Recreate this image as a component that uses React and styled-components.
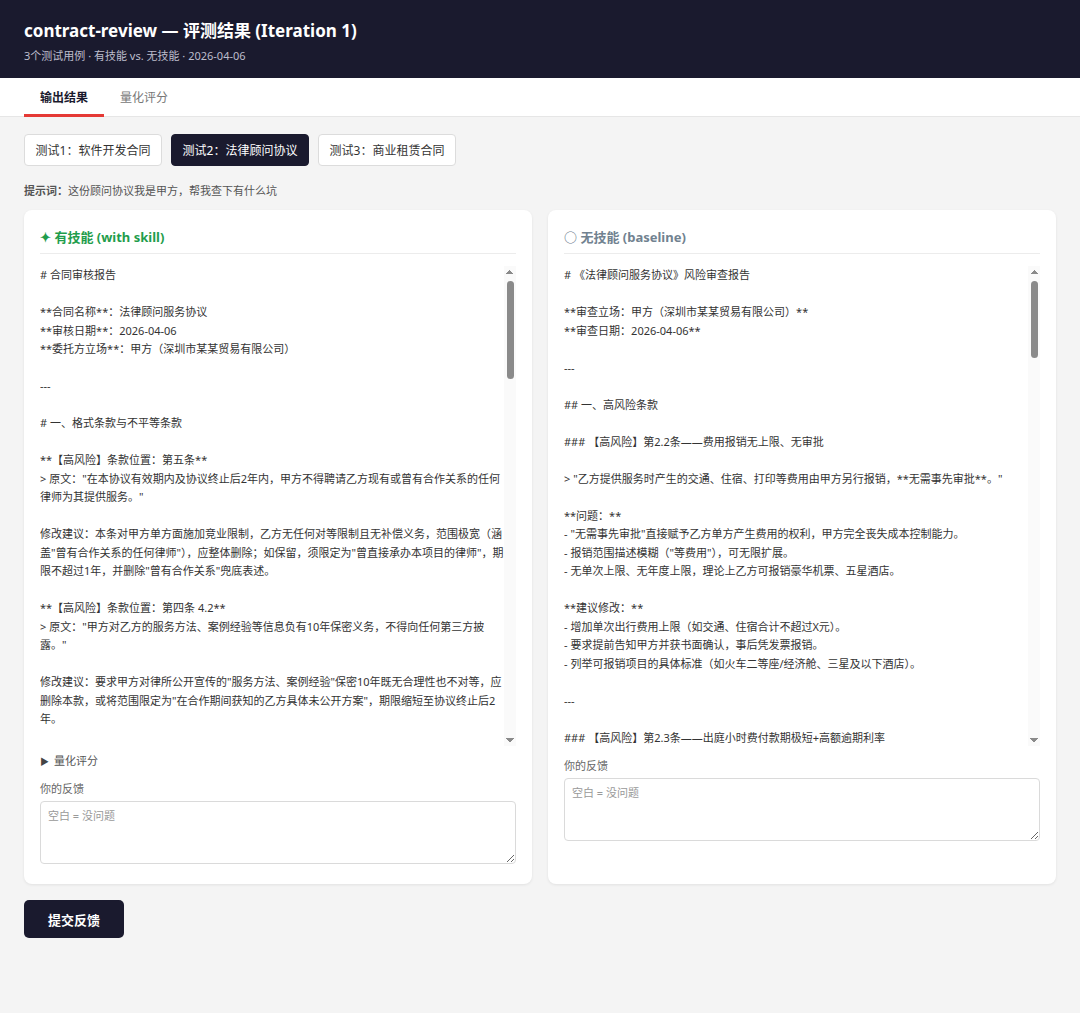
import React from 'react'
import styled, { createGlobalStyle } from 'styled-components'

const withSkill = `# 合同审核报告

**合同名称**：法律顾问服务协议
**审核日期**：2026-04-06
**委托方立场**：甲方（深圳市某某贸易有限公司）

---

# 一、格式条款与不平等条款

**【高风险】条款位置：第五条**
> 原文："在本协议有效期内及协议终止后2年内，甲方不得聘请乙方现有或曾有合作关系的任何律师为其提供服务。"

修改建议：本条对甲方单方面施加竞业限制，乙方无任何对等限制且无补偿义务，范围极宽（涵盖"曾有合作关系的任何律师"），应整体删除；如保留，须限定为"曾直接承办本项目的律师"，期限不超过1年，并删除"曾有合作关系"兜底表述。

**【高风险】条款位置：第四条 4.2**
> 原文："甲方对乙方的服务方法、案例经验等信息负有10年保密义务，不得向任何第三方披露。"

修改建议：要求甲方对律所公开宣传的"服务方法、案例经验"保密10年既无合理性也不对等，应删除本款，或将范围限定为"在合作期间获知的乙方具体未公开方案"，期限缩短至协议终止后2年。

**【中风险】条款位置：第六条 6.1**
> 原文："甲方应于每月5日前支付当月顾问费，逾期每日按应付金额的千分之五支付违约金。"

修改建议：日千分之五折合年化约182.5%，远超法定上限，应调整为"按全国银行间同业拆借中心公布的一年期贷款市场报价利率（LPR）计算"，并给予10个工作日宽限期。

**【中风险】条款位置：第七条 7.3**
> 原文："乙方律师因工作安排无法按时出席的，可指派其他律师代为处理，甲方不得拒绝。"

修改建议：应增加"须事先书面征得甲方同意，且替代律师执业年限不低于原律师"，保障甲方对服务质量的控制权。

---

# 二、权利义务失衡

**【高风险】条款位置：第三条 3.4**
> 原文："乙方对其出具的法律意见不承担任何责任，甲方据此作出决策的风险自行承担。"

修改建议：该条款免除乙方因故意或重大过失造成损失的责任，依《民法典》第五百零六条应属无效。建议改为"乙方因故意或重大过失导致法律意见错误，给甲方造成损失的，应在已收取顾问费范围内承担赔偿责任"。

**【中风险】条款位置：第八条 8.2**
> 原文："甲方提前解除本协议的，已支付费用不予退还，并应支付剩余服务期顾问费的50%作为补偿。"

修改建议：解除补偿比例过高，且未区分解除原因。建议修改为：乙方存在违约行为时甲方可无责解除；无因解除的，补偿不超过一个月顾问费。

**【低风险】条款位置：第九条**
> 原文："本协议未尽事宜，以乙方解释为准。"

修改建议：删除单方解释权条款，改为"由双方协商一致后签订补充协议"。

---

# 三、争议解决

**【中风险】条款位置：第十一条**
> 原文："因本协议产生的争议，由乙方所在地人民法院管辖。"

修改建议：甲方位于深圳，建议约定"由甲方所在地人民法院管辖"，或选择深圳国际仲裁院仲裁，降低甲方维权成本。

---

# 四、修改优先级汇总

| 优先级 | 条款 | 问题 | 建议 |
|---|---|---|---|
| 1 | 第五条 | 单方竞业限制 | 删除或大幅限缩 |
| 2 | 第三条 3.4 | 免除乙方全部责任 | 改为过错赔偿 |
| 3 | 第四条 4.2 | 不对等保密义务 | 删除或限缩 |
| 4 | 第六条 6.1 | 违约金过高 | 调整为LPR |
| 5 | 第八条 8.2 | 解除补偿过高 | 区分解除原因 |
| 6 | 第十一条 | 管辖不利 | 改为甲方所在地 |
| 7 | 第九条 | 单方解释权 | 删除 |

---

# 五、签约建议

1. 第五条、第三条3.4为实质性不利条款，建议作为签约前提条件要求对方修改。
2. 费用条款建议附件列明报销标准及审批流程。
3. 建议要求乙方提供承办律师名单、执业证号及执业年限。
4. 建议约定服务质量考核指标（如响应时限、文件出具时限）。
5. 签约前核实乙方律所执业许可及职业责任保险情况。

---

*本报告仅基于甲方提供的合同文本，不构成正式法律意见。*`

const baseline = `# 《法律顾问服务协议》风险审查报告

**审查立场：甲方（深圳市某某贸易有限公司）**
**审查日期：2026-04-06**

---

## 一、高风险条款

### 【高风险】第2.2条——费用报销无上限、无审批

> "乙方提供服务时产生的交通、住宿、打印等费用由甲方另行报销，**无需事先审批**。"

**问题：**
- "无需事先审批"直接赋予乙方单方产生费用的权利，甲方完全丧失成本控制能力。
- 报销范围描述模糊（"等费用"），可无限扩展。
- 无单次上限、无年度上限，理论上乙方可报销豪华机票、五星酒店。

**建议修改：**
- 增加单次出行费用上限（如交通、住宿合计不超过X元）。
- 要求提前告知甲方并获书面确认，事后凭发票报销。
- 列举可报销项目的具体标准（如火车二等座/经济舱、三星及以下酒店）。

---

### 【高风险】第2.3条——出庭小时费付款期极短+高额逾期利率

> "出庭小时费按每小时3000元计算，甲方应在收到账单后3日内付清，逾期按日千分之三计收利息。"

**问题：**
- 3日付款期远短于企业通常的财务审批周期（一般15-30日），甲方极易违约。
- 日千分之三折合年化约109.5%，明显超过司法保护上限。
- 出庭时长由乙方单方记录，甲方无核对途径。

**建议修改：**
- 付款期延长至收到合法发票后30日内。
- 逾期利息按LPR计算，或删除逾期利息条款。
- 要求乙方提供出庭时长记录及法院开庭通知等证明材料。

---

### 【高风险】第5条——单方竞业限制

> "在本协议有效期内及协议终止后2年内，甲方不得聘请乙方现有或曾有合作关系的任何律师为其提供服务。"

**问题：**
- 该限制仅约束甲方，乙方无任何对等义务。
- "曾有合作关系的任何律师"范围无边界，实际上限制甲方选择律师的自由。
- 无任何补偿对价。

**建议修改：**
- 建议整体删除。
- 如乙方坚持，限定为"直接承办甲方事务的律师"，期限不超过6个月。

---

### 【高风险】第3.4条——乙方免责条款

> "乙方对其出具的法律意见不承担任何责任，甲方据此作出决策的风险自行承担。"

**问题：**
- 完全免除乙方专业责任，与律师执业规范相悖。
- 依据《民法典》第506条，造成对方财产损失的故意或重大过失免责条款无效。

**建议修改：**
- 改为"乙方因故意或重大过失给甲方造成损失的，依法承担赔偿责任"。
- 要求乙方提供职业责任保险证明。

---

## 二、中风险条款

### 【中风险】第4.2条——单方保密义务

> "甲方对乙方的服务方法、案例经验等信息负有10年保密义务，不得向任何第三方披露。"

**问题：**
- 保密义务仅约束甲方，期限10年过长。
- "服务方法、案例经验"定义模糊，难以界定范围。

**建议修改：**
- 改为双方互负保密义务。
- 保密期限调整为协议终止后2年。
- 明确保密信息定义及除外情形（如已公开信息）。

### 【中风险】第7.3条——律师替换无需同意

> "乙方律师因工作安排无法按时出席的，可指派其他律师代为处理，甲方不得拒绝。"

**问题：**
- 甲方无法保障服务律师的资历与质量。

**建议修改：**
- 替换律师须提前3个工作日书面通知并经甲方同意。
- 替代律师执业年限不得低于原承办律师。

### 【中风险】第8.2条——提前解除补偿过高

> "甲方提前解除本协议的，已支付费用不予退还，并应支付剩余服务期顾问费的50%作为补偿。"

**问题：**
- 未区分乙方违约情形，甲方即使因乙方失职解约仍需补偿。

**建议修改：**
- 乙方违约时甲方有权无责解除并要求退还未服务期间费用。
- 无因解除补偿不超过一个月顾问费。

---

## 三、低风险条款

### 【低风险】第9条——单方解释权

> "本协议未尽事宜，以乙方解释为准。"

**建议修改：**
- 删除，改为双方协商签订补充协议。

### 【低风险】第11条——管辖地

> "因本协议产生的争议，由乙方所在地人民法院管辖。"

**建议修改：**
- 改为甲方所在地（深圳）人民法院管辖，或约定深圳国际仲裁院仲裁。

---

## 四、总结

本协议整体明显偏向乙方，共发现高风险条款4项、中风险条款3项、低风险条款2项。建议甲方在签约前重点就第2.2条、第2.3条、第5条、第3.4条与乙方谈判，未达成修改前不建议签署。`

const cases = ['测试1：软件开发合同', '测试2：法律顾问协议', '测试3：商业租赁合同']

const GlobalStyle = createGlobalStyle`
  html, body {
    margin: 0;
    background: #f4f4f4;
  }
  body {
    font-family: "Segoe UI", "Noto Sans", "Noto Sans CJK SC", sans-serif;
    color: #222;
  }
  * { box-sizing: border-box; }
`

function OutputPane({ text, thumb }) {
  return (
    <OutputFrame>
      <Output>{text}</Output>
      <ScrollTrack aria-hidden="true">
        <ScrollArrow $dir="up" />
        <ScrollThumb style={{ height: thumb }} />
        <ScrollArrow $dir="down" />
      </ScrollTrack>
    </OutputFrame>
  )
}

export default function App() {
  return (
    <>
      <GlobalStyle />
      <Header>
        <Title>contract-review — 评测结果 (Iteration 1)</Title>
        <Subtitle>3个测试用例 · 有技能 vs. 无技能 · 2026-04-06</Subtitle>
      </Header>
      <TabBar>
        <Tab $active>输出结果</Tab>
        <Tab>量化评分</Tab>
      </TabBar>
      <Main>
        <CaseRow>
          {cases.map((c, i) => (
            <CaseButton key={c} $active={i === 1}>{c}</CaseButton>
          ))}
        </CaseRow>
        <Prompt>
          <b>提示词：</b>这份顾问协议我是甲方，帮我查下有什么坑
        </Prompt>
        <Columns>
          <Card>
            <CardTitle $color="#1f9d4c">✦ 有技能 (with skill)</CardTitle>
            <OutputPane text={withSkill} thumb={98} />
            <Scores>
              <summary>量化评分</summary>
            </Scores>
            <FeedbackLabel>你的反馈</FeedbackLabel>
            <Feedback placeholder="空白 = 没问题" />
          </Card>
          <Card>
            <CardTitle $color="#718290">○ 无技能 (baseline)</CardTitle>
            <OutputPane text={baseline} thumb={77} />
            <FeedbackLabel>你的反馈</FeedbackLabel>
            <Feedback placeholder="空白 = 没问题" />
          </Card>
        </Columns>
        <SubmitButton>提交反馈</SubmitButton>
      </Main>
    </>
  )
}

const Header = styled.header`
  background: #1a1a2e;
  height: 78px;
  padding: 20px 24px 0;
  color: #fff;
`

const Title = styled.h1`
  margin: 0;
  font-size: 17px;
  font-weight: 700;
  line-height: 22px;
`

const Subtitle = styled.div`
  margin-top: 6px;
  font-size: 11px;
  line-height: 16px;
  color: #bdbdcc;
`

const TabBar = styled.nav`
  display: flex;
  background: #fff;
  height: 39px;
  padding: 0 24px;
  border-bottom: 1px solid #e6e6e6;
`

const Tab = styled.div`
  width: 80px;
  display: flex;
  align-items: center;
  justify-content: center;
  font-size: 12px;
  font-weight: ${({ $active }) => ($active ? 700 : 400)};
  color: ${({ $active }) => ($active ? '#1a1a2e' : '#777')};
  border-bottom: 3px solid ${({ $active }) => ($active ? '#e53935' : 'transparent')};
  padding-top: 2px;
  margin-bottom: -1px;
`

const Main = styled.main`
  padding: 17px 24px 40px;
`

const CaseRow = styled.div`
  display: flex;
  gap: 9px;
`

const CaseButton = styled.button`
  height: 32px;
  width: 138px;
  padding: 0;
  font-family: inherit;
  font-size: 12px;
  border-radius: 4px;
  border: 1.5px solid ${({ $active }) => ($active ? '#1a1a2e' : '#dcdcdc')};
  background: ${({ $active }) => ($active ? '#1a1a2e' : '#fff')};
  color: ${({ $active }) => ($active ? '#fff' : '#333')};
  cursor: pointer;
`

const Prompt = styled.div`
  margin-top: 17px;
  font-size: 11px;
  line-height: 16px;
  color: #555;

  b {
    font-weight: 700;
  }
`

const Columns = styled.div`
  display: grid;
  grid-template-columns: 1fr 1fr;
  gap: 16px;
  margin-top: 11px;
`

const Card = styled.section`
  background: #fff;
  border-radius: 8px;
  box-shadow: 0 1px 3px rgba(0, 0, 0, 0.08);
  padding: 16px 16px 20px;
`

const CardTitle = styled.h2`
  margin: 0;
  font-size: 13px;
  font-weight: 700;
  line-height: 22px;
  color: ${({ $color }) => $color};
  padding-bottom: 5px;
  border-bottom: 1px solid #ececec;
`

const OutputFrame = styled.div`
  display: flex;
  height: 480px;
  margin-top: 12px;
`

const Output = styled.pre`
  flex: 1;
  min-width: 0;
  margin: 0;
  overflow-y: auto;
  scrollbar-width: none;
  white-space: pre-wrap;
  word-break: break-all;
  font-family: inherit;
  font-size: 11px;
  line-height: 18.5px;
  color: #333;
`

const ScrollTrack = styled.div`
  flex: 0 0 12px;
  background: #fafafa;
  display: flex;
  flex-direction: column;
  align-items: center;
`

const ScrollArrow = styled.div`
  width: 8px;
  height: 12px;
  margin-top: ${({ $dir }) => ($dir === 'down' ? 'auto' : '0')};
  background-repeat: no-repeat;
  background-size: 8px 4px;
  background-position: center;
  background-image: ${({ $dir }) =>
    $dir === 'up'
      ? 'conic-gradient(from 135deg at 50% 0, #8a8a8a 0 90deg, transparent 90deg)'
      : 'conic-gradient(from -45deg at 50% 100%, #8a8a8a 0 90deg, transparent 90deg)'};
`

const ScrollThumb = styled.div`
  width: 7px;
  margin-top: 3px;
  border-radius: 4px;
  background: #8a8a8a;
`

const Scores = styled.details`
  margin-top: 7px;
  font-size: 11px;
  line-height: 15px;
  color: #555;

  summary {
    list-style: none;
    cursor: pointer;
  }
  summary::-webkit-details-marker {
    display: none;
  }
  summary::before {
    content: '▶';
    font-size: 9px;
    margin-right: 5px;
    color: #444;
  }
`

const FeedbackLabel = styled.div`
  margin-top: 12px;
  font-size: 11px;
  line-height: 16px;
  color: #666;
`

const Feedback = styled.textarea`
  display: block;
  width: 100%;
  height: 63px;
  margin-top: 4px;
  padding: 6px 7px;
  border: 1px solid #dadada;
  border-radius: 4px;
  font-family: inherit;
  font-size: 11px;
  line-height: 16px;
  color: #333;
  resize: vertical;

  &::placeholder {
    color: #999;
  }
`

const SubmitButton = styled.button`
  margin-top: 16px;
  height: 38px;
  padding: 0 24px;
  border: none;
  border-radius: 5px;
  background: #1a1a2e;
  color: #fff;
  font-family: inherit;
  font-size: 13px;
  font-weight: 700;
  cursor: pointer;
`
